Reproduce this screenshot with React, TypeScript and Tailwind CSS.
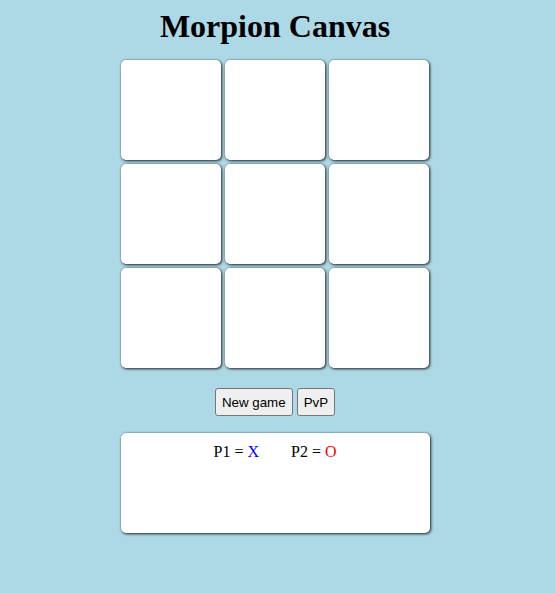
import React from "react";

export default function App() {
  const cells = Array.from({ length: 9 });
  return (
    <div className="min-h-[593px] w-full bg-[#add8e6]">
      <div className="flex w-[550px] flex-col items-center pt-[8px]">
        <h1
          className="m-0 text-[32px] font-bold leading-[36px] text-black"
          style={{ fontFamily: '"Liberation Serif", "Times New Roman", serif' }}
        >
          Morpion Canvas
        </h1>
        <div className="mt-[16px] grid grid-cols-[100px_100px_100px] gap-[4px]">
          {cells.map((_, i) => (
            <div
              key={i}
              className="h-[100px] w-[100px] rounded-[5px] bg-white shadow-[0_0_2px_rgba(0,0,0,0.35),1px_1px_3px_rgba(0,0,0,0.8)]"
            />
          ))}
        </div>
        <div
          className="mt-[20px] flex gap-[4px]"
          style={{ fontFamily: '"Liberation Sans", Arial, sans-serif' }}
        >
          <button className="h-[28px] rounded-[3px] border border-[#767676] bg-[#efefef] px-[6px] pt-[1px] text-[13.33px] text-black">
            New game
          </button>
          <button className="h-[28px] rounded-[3px] border border-[#767676] bg-[#efefef] px-[6px] pt-[1px] text-[13.33px] text-black">
            PvP
          </button>
        </div>
        <div
          className="mt-[17px] flex h-[100px] w-[309px] justify-center gap-[32px] rounded-[5px] bg-white pt-[10px] text-[16px] leading-[18px] text-black shadow-[0_0_2px_rgba(0,0,0,0.35),1px_1px_3px_rgba(0,0,0,0.8)]"
          style={{ fontFamily: '"Liberation Serif", "Times New Roman", serif' }}
        >
          <span>
            P1 = <span className="text-[#0000ff]">X</span>
          </span>
          <span>
            P2 = <span className="text-[#ff0000]">O</span>
          </span>
        </div>
      </div>
    </div>
  );
}
